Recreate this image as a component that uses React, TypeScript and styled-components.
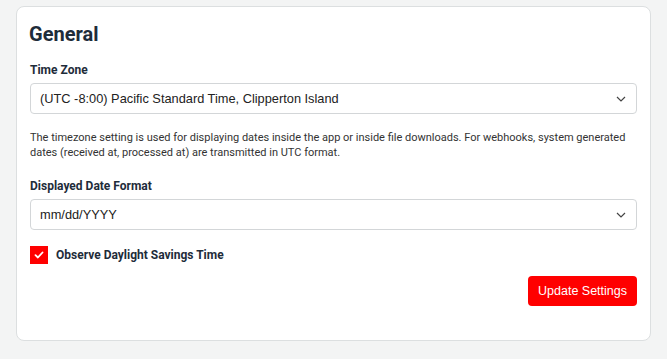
import styled, { createGlobalStyle } from 'styled-components'

const GlobalStyle = createGlobalStyle`
  body {
    margin: 0;
    background: #f3f4f4;
    font-family: Roboto, 'Liberation Sans', sans-serif;
  }
`

const Page = styled.div`
  padding: 6px 16px 18px 16px;
`

const Card = styled.div`
  background: #fff;
  border: 1px solid #dcdfe0;
  border-radius: 8px;
  padding: 14px 13px 34px 13px;
  display: flex;
  flex-direction: column;
`

const Title = styled.h2`
  margin: 1px 0 0 -1px;
  font-family: Roboto, sans-serif;
  font-size: 20px;
  font-weight: 700;
  color: #1e2c3a;
  line-height: 24px;
`

const Label = styled.label<{ $top: number }>`
  display: block;
  font-family: Roboto, sans-serif;
  font-size: 12px;
  font-weight: 700;
  color: #1e2c3a;
  margin: ${(p) => p.$top}px 0 6px 0;
  line-height: 14px;
`

const SelectBox = styled.div`
  height: 29px;
  border: 1px solid #d3d6d8;
  border-radius: 4px;
  display: flex;
  align-items: center;
  justify-content: space-between;
  padding: 0 10px 0 9px;
  font-family: 'Liberation Sans', Arial, sans-serif;
  font-size: 12.8px;
  color: #222;
`

const Help = styled.p`
  margin: 16px 0 0 0;
  font-family: Roboto, sans-serif;
  font-size: 11px;
  line-height: 15px;
  color: #333;
`

const CheckRow = styled.div`
  display: flex;
  align-items: center;
  gap: 8px;
  margin-top: 16px;
`

const CheckBox = styled.span`
  width: 18px;
  height: 18px;
  background: #ff0000;
  display: flex;
  align-items: center;
  justify-content: center;
`

const CheckLabel = styled.span`
  font-family: Roboto, sans-serif;
  font-size: 12px;
  font-weight: 700;
  color: #1e2c3a;
`

const Actions = styled.div`
  display: flex;
  justify-content: flex-end;
  margin-top: 12px;
`

const Button = styled.button`
  height: 30px;
  padding: 0 10px;
  background: #ff0000;
  color: #fff;
  border: none;
  border-radius: 4px;
  font-family: 'Liberation Sans', Arial, sans-serif;
  font-size: 12.5px;
`

const Chevron = () => (
  <svg width="10" height="6" viewBox="0 0 10 6" fill="none">
    <path d="M1 1l4 4 4-4" stroke="#444" strokeWidth="1.2" />
  </svg>
)

export default function App() {
  return (
    <Page>
      <GlobalStyle />
      <Card>
        <Title>General</Title>
        <Label $top={17}>Time Zone</Label>
        <SelectBox>
          <span>(UTC -8:00) Pacific Standard Time, Clipperton Island</span>
          <Chevron />
        </SelectBox>
        <Help>
          The timezone setting is used for displaying dates inside the app or inside file downloads. For webhooks, system generated dates (received at, processed at) are transmitted in UTC format.
        </Help>
        <Label $top={19}>Displayed Date Format</Label>
        <SelectBox>
          <span>mm/dd/YYYY</span>
          <Chevron />
        </SelectBox>
        <CheckRow>
          <CheckBox>
            <svg width="10" height="8" viewBox="0 0 10 8" fill="none">
              <path d="M1.5 4.2l2.4 2.3L8.5 1.5" stroke="#fff" strokeWidth="1.8" strokeLinecap="round" strokeLinejoin="round" />
            </svg>
          </CheckBox>
          <CheckLabel>Observe Daylight Savings Time</CheckLabel>
        </CheckRow>
        <Actions>
          <Button>Update Settings</Button>
        </Actions>
      </Card>
    </Page>
  )
}
